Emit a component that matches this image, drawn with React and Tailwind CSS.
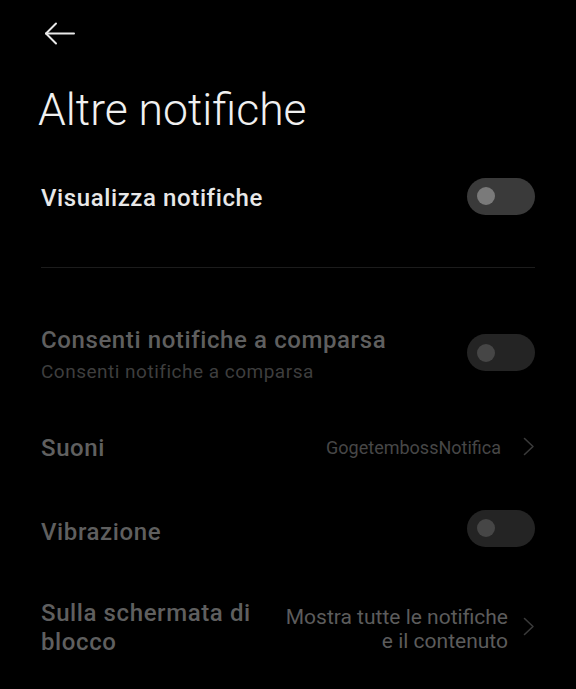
import React from 'react';

function Toggle({ disabled, className = '' }) {
  return (
    <div
      className={`flex h-[37px] w-[68px] flex-none items-center rounded-full pl-[10px] ${
        disabled ? 'bg-[#242424]' : 'bg-[#3a3a3a]'
      } ${className}`}
    >
      <div className={`h-[18px] w-[18px] rounded-full ${disabled ? 'bg-[#464646]' : 'bg-[#7a7a7a]'}`} />
    </div>
  );
}

function Chevron({ className = '' }) {
  return (
    <svg width="12" height="19" viewBox="0 0 12 19" fill="none" className={`flex-none ${className}`}>
      <polyline points="1.5,1.5 10,9.5 1.5,17.5" stroke="#3a3a3a" strokeWidth="1.6" strokeLinecap="round" strokeLinejoin="round" />
    </svg>
  );
}

export default function App() {
  return (
    <div className="min-h-[689px] w-full bg-black font-['Roboto','Liberation_Sans',sans-serif]">
      {/* header */}
      <div className="flex h-[66px] items-center pl-[44px]">
        <svg width="31" height="23" viewBox="0 0 31 23" fill="none">
          <line x1="2" y1="11.5" x2="30" y2="11.5" stroke="#e8e8e8" strokeWidth="2" strokeLinecap="round" />
          <polyline points="12,1.5 2,11.5 12,21.5" stroke="#e8e8e8" strokeWidth="2" strokeLinecap="round" strokeLinejoin="round" />
        </svg>
      </div>

      <h1 className="mt-[17px] pl-[38px] text-[44.5px] leading-[54px] font-light text-[#f0f0f0]">Altre notifiche</h1>

      <div className="px-[41px]">
        {/* Visualizza notifiche */}
        <div className="mt-[29px] flex h-[60px] items-center justify-between">
          <span className="pt-[3px] text-[24px] leading-[28px] tracking-[0.6px] font-medium text-[#e8e8e8]">Visualizza notifiche</span>
          <Toggle />
        </div>

        <div className="mt-[41px] h-px bg-[#1c1c1c]" />

        {/* Consenti notifiche a comparsa */}
        <div className="mt-[58px] flex items-center justify-between">
          <div>
            <div className="text-[24px] leading-[28px] tracking-[0.6px] font-medium text-[#5f5f5f]">Consenti notifiche a comparsa</div>
            <div className="mt-[7px] text-[19px] leading-[22px] tracking-[0.5px] text-[#3e3e3e]">Consenti notifiche a comparsa</div>
          </div>
          <Toggle disabled className="mb-[4px]" />
        </div>

        {/* Suoni */}
        <div className="mt-[51px] flex h-[28px] items-center justify-between">
          <span className="text-[24px] leading-[28px] tracking-[0.6px] font-medium text-[#606060]">Suoni</span>
          <div className="flex items-center">
            <span className="text-[18px] leading-[28px] text-[#474747]">GogetembossNotifica</span>
            <Chevron className="ml-[22px] mb-[3px]" />
          </div>
        </div>

        {/* Vibrazione */}
        <div className="mt-[50px] flex h-[40px] items-center justify-between">
          <span className="text-[24px] leading-[28px] tracking-[0.6px] font-medium text-[#5f5f5f]">Vibrazione</span>
          <Toggle disabled className="mb-[8px]" />
        </div>

        {/* Sulla schermata di blocco */}
        <div className="mt-[47px] flex items-start justify-between">
          <div className="w-[232px] flex-none text-[24px] leading-[29px] tracking-[0.6px] font-medium text-[#5f5f5f]">Sulla schermata di blocco</div>
          <div className="flex items-center self-stretch">
            <div className="mt-[1px] text-right text-[21px] leading-[24px] text-[#5c5c5c]">
              Mostra tutte le notifiche
              <br />e il contenuto
            </div>
            <Chevron className="ml-[15px] mb-[4px]" />
          </div>
        </div>
      </div>
    </div>
  );
}
